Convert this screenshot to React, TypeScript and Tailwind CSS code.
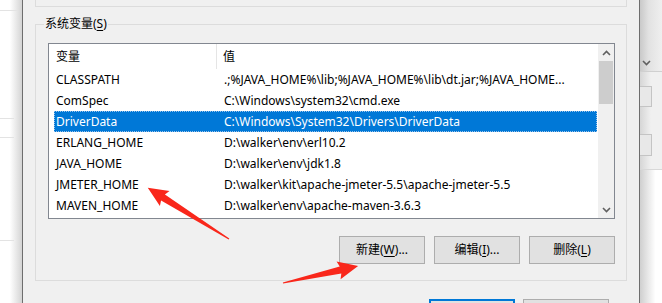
const rows = [
  { name: 'CLASSPATH', value: '.;%JAVA_HOME%\\lib;%JAVA_HOME%\\lib\\dt.jar;%JAVA_HOME...' },
  { name: 'ComSpec', value: 'C:\\Windows\\system32\\cmd.exe' },
  { name: 'DriverData', value: 'C:\\Windows\\System32\\Drivers\\DriverData', selected: true },
  { name: 'ERLANG_HOME', value: 'D:\\walker\\env\\erl10.2' },
  { name: 'JAVA_HOME', value: 'D:\\walker\\env\\jdk1.8' },
  { name: 'JMETER_HOME', value: 'D:\\walker\\kit\\apache-jmeter-5.5\\apache-jmeter-5.5' },
  { name: 'MAVEN_HOME', value: 'D:\\walker\\env\\apache-maven-3.6.3' },
]

function Chevron({ up }: { up?: boolean }) {
  return (
    <svg width="9" height="6" viewBox="0 0 9 6">
      <path d={up ? 'M1 5 L4.5 1.5 L8 5' : 'M1 1 L4.5 4.5 L8 1'} fill="none" stroke="#606060" strokeWidth="1.6" />
    </svg>
  )
}

function Arrow({ x, y, len, angle }: { x: number; y: number; len: number; angle: number }) {
  const L = len
  const pts = `0,-0.6 ${L - 18},-3.6 ${L - 20},-9 ${L},0 ${L - 20},9 ${L - 18},3.6 0,0.6`
  return <polygon points={pts} fill="#f9271b" transform={`translate(${x} ${y}) rotate(${angle})`} />
}

function Btn({ label, k, rest }: { label: string; k: string; rest: string }) {
  return (
    <div className="flex h-[28px] w-[86px] shrink-0 items-center justify-center border border-[#adadad] bg-[#e1e1e1] text-[12px] text-black">
      {label}(<span className="underline underline-offset-2">{k}</span>){rest}
    </div>
  )
}

export default function App() {
  return (
    <div
      className="relative flex h-[303px] w-[662px] overflow-hidden bg-white"
      style={{ fontFamily: '"Noto Sans", "Noto Sans CJK SC", sans-serif' }}
    >
      {/* window behind, left */}
      <div className="flex w-[22px] shrink-0 flex-col bg-[linear-gradient(to_right,#ffffff_45%,#d4d4d4)]">
        <div className="mt-[10px] h-px w-[18px] shrink-0 bg-[#e3e3e3]" />
        <div className="mt-[107px] h-px w-[14px] shrink-0 bg-[#e3e3e3]" />
        <div className="mt-[18px] h-px w-[14px] shrink-0 bg-[#e3e3e3]" />
        <div className="mt-[102px] h-px w-[14px] shrink-0 bg-[#e3e3e3]" />
      </div>

      {/* dialog */}
      <div className="flex w-[618px] shrink-0 flex-col border-x border-[#6e6e6e] bg-[#f0f0f0]">
        <div className="ml-[12px] h-[7px] w-[592px] shrink-0 border-x border-b border-[#dcdcdc]" />

        <div className="relative ml-[12px] mt-[17px] h-[257px] w-[592px] shrink-0 border border-[#dcdcdc] pl-[12px] pt-[18px]">
          <span className="absolute -top-[10px] left-[8px] bg-[#f0f0f0] px-px text-[12px] leading-[17px] text-black">
            系统变量(<span className="underline underline-offset-2">S</span>)
          </span>

          <div className="flex h-[176px] w-[567px] border border-[#828790] bg-white text-[12px] text-black">
            <div className="flex w-[548px] flex-col">
              <div className="flex h-[25px] shrink-0 items-center">
                <div className="flex h-full w-[168px] items-center border-r border-[#e5e5e5] pl-[7px]">变量</div>
                <div className="pl-[6px]">值</div>
              </div>
              <div className="flex flex-col pl-[5px]">
                {rows.map(r => (
                  <div
                    key={r.name}
                    className={`flex h-[21px] shrink-0 items-center ${
                      r.selected ? 'bg-[#0078d7] text-white outline-1 -outline-offset-1 outline-dotted outline-[#9cc3ea]' : ''
                    }`}
                  >
                    <div className="w-[170px] shrink-0 pl-[2px]">{r.name}</div>
                    <div className="w-[368px] truncate">{r.value}</div>
                  </div>
                ))}
              </div>
            </div>
            <div className="flex w-[17px] flex-col border-l border-white bg-[#f0f0f0]">
              <div className="flex h-[17px] shrink-0 items-center justify-center">
                <Chevron up />
              </div>
              <div className="mx-px h-[43px] shrink-0 bg-[#cdcdcd]" />
              <div className="flex-1" />
              <div className="flex h-[17px] shrink-0 items-center justify-center">
                <Chevron />
              </div>
            </div>
          </div>

          <div className="mt-[17px] flex w-[567px] justify-end gap-[9px]">
            <Btn label="新建" k="W" rest="..." />
            <Btn label="编辑" k="I" rest="..." />
            <Btn label="删除" k="L" rest="" />
          </div>
        </div>

        <div className="ml-[406px] mt-[18px] flex shrink-0 gap-[8px]">
          <div className="h-[28px] w-[86px] shrink-0 border-2 border-[#0078d7] bg-[#e1e1e1]" />
          <div className="h-[28px] w-[86px] shrink-0 border border-[#adadad] bg-[#e1e1e1]" />
        </div>
      </div>

      {/* window behind, right */}
      <div className="flex w-[22px] shrink-0 flex-col">
        <div className="flex h-[72px] shrink-0 flex-col justify-end border-b border-[#d0d0d0] bg-[linear-gradient(to_right,#c9c9c9,#e2e2e2_40%,#efefef)] pb-[5px] pl-[2px]">
          <Chevron />
        </div>
        <div className="flex h-[97px] shrink-0 flex-col bg-[linear-gradient(to_right,#d6d6d6,#f0f0f0_50%)]">
          <div className="mt-[14px] h-[21px] w-[12px] shrink-0 border border-l-0 border-[#c4c4c4] bg-[#e8e8e8]" />
          <div className="mt-[27px] h-[22px] w-[12px] shrink-0 border border-l-0 border-[#c4c4c4] bg-[#e8e8e8]" />
        </div>
        <div className="flex-1 border-t border-[#d8d8d8] bg-[linear-gradient(to_right,#cfcfcf,#ffffff_70%)]" />
      </div>

      {/* annotation arrows */}
      <svg className="pointer-events-none absolute inset-0" width="662" height="303">
        <Arrow x={229} y={239} len={96} angle={-147.8} />
        <Arrow x={283} y={283} len={77} angle={-12.8} />
      </svg>
    </div>
  )
}
